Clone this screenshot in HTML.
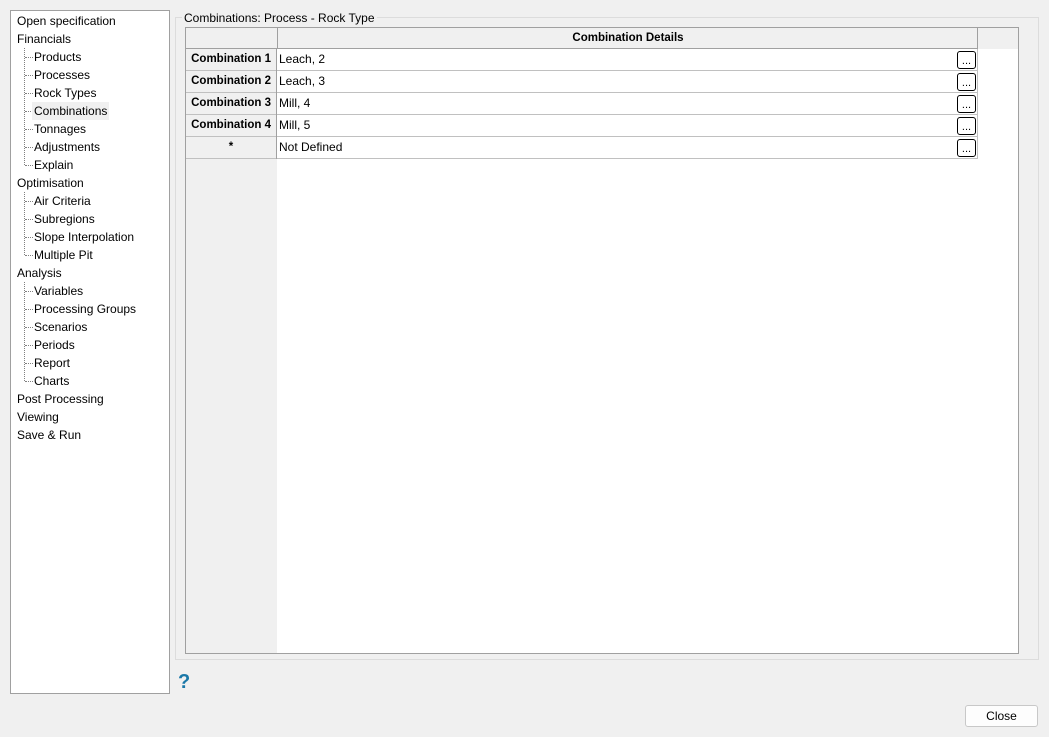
<!DOCTYPE html>
<html><head><style>
body{margin:0;width:1049px;height:737px;background:#f0f0f0;font-family:"Liberation Sans",sans-serif;font-size:12px;color:#000;position:relative;overflow:hidden}
.a{position:absolute}
#tree{left:10px;top:10px;width:158px;height:682px;border:1px solid #a0a0a0;background:#fff}
.t{position:absolute;white-space:nowrap;line-height:18px}
.dl{position:absolute;border-top:1px dotted #808080;width:8px}
.vl{position:absolute;border-left:1px dotted #808080;left:13px}
#grp{left:175px;top:17px;width:862px;height:641px;border:1px solid #dcdcdc}
#grid{left:185px;top:27px;width:832px;height:625px;border:1px solid #a0a0a0;background:#fff}
.cell{position:absolute;box-sizing:border-box;line-height:21px;white-space:nowrap}
.b{font-weight:bold;font-size:11.5px}
.btn{position:absolute;left:771px;width:17px;height:16px;border:1px solid #000;border-radius:3px;background:#fff;font-size:11px;text-align:center;line-height:19px;overflow:hidden}
</style></head><body>
<div id="tree" class="a">
<div class="t" style="left:6px;top:1px">Open specification</div>
<div class="t" style="left:6px;top:19px">Financials</div>
<div class="vl" style="top:37px;height:117px"></div>
<div class="dl" style="left:14px;top:46px"></div><div class="t" style="left:23px;top:37px">Products</div>
<div class="dl" style="left:14px;top:64px"></div><div class="t" style="left:23px;top:55px">Processes</div>
<div class="dl" style="left:14px;top:82px"></div><div class="t" style="left:23px;top:73px">Rock Types</div>
<div class="dl" style="left:14px;top:100px"></div><div class="t" style="left:21px;top:91px;background:#f0f0f0;padding:0 2px">Combinations</div>
<div class="dl" style="left:14px;top:118px"></div><div class="t" style="left:23px;top:109px">Tonnages</div>
<div class="dl" style="left:14px;top:136px"></div><div class="t" style="left:23px;top:127px">Adjustments</div>
<div class="dl" style="left:14px;top:154px"></div><div class="t" style="left:23px;top:145px">Explain</div>
<div class="t" style="left:6px;top:163px">Optimisation</div>
<div class="vl" style="top:181px;height:63px"></div>
<div class="dl" style="left:14px;top:190px"></div><div class="t" style="left:23px;top:181px">Air Criteria</div>
<div class="dl" style="left:14px;top:208px"></div><div class="t" style="left:23px;top:199px">Subregions</div>
<div class="dl" style="left:14px;top:226px"></div><div class="t" style="left:23px;top:217px">Slope Interpolation</div>
<div class="dl" style="left:14px;top:244px"></div><div class="t" style="left:23px;top:235px">Multiple Pit</div>
<div class="t" style="left:6px;top:253px">Analysis</div>
<div class="vl" style="top:271px;height:99px"></div>
<div class="dl" style="left:14px;top:280px"></div><div class="t" style="left:23px;top:271px">Variables</div>
<div class="dl" style="left:14px;top:298px"></div><div class="t" style="left:23px;top:289px">Processing Groups</div>
<div class="dl" style="left:14px;top:316px"></div><div class="t" style="left:23px;top:307px">Scenarios</div>
<div class="dl" style="left:14px;top:334px"></div><div class="t" style="left:23px;top:325px">Periods</div>
<div class="dl" style="left:14px;top:352px"></div><div class="t" style="left:23px;top:343px">Report</div>
<div class="dl" style="left:14px;top:370px"></div><div class="t" style="left:23px;top:361px">Charts</div>
<div class="t" style="left:6px;top:379px">Post Processing</div>
<div class="t" style="left:6px;top:397px">Viewing</div>
<div class="t" style="left:6px;top:415px">Save &amp; Run</div>
</div>
<div id="grp" class="a"></div>
<div class="a" style="left:182px;top:10px;background:#f0f0f0;padding:0 2px;line-height:16px">Combinations: Process - Rock Type</div>
<div id="grid" class="a">
<div class="cell" style="left:0;top:0;width:832px;height:21px;background:#f0f0f0"></div>
<div class="cell" style="left:0;top:0;width:91px;height:625px;background:#f0f0f0"></div>
<div class="cell" style="left:0;top:0;width:792px;height:21px;border-right:1px solid #a0a0a0;border-bottom:1px solid #a0a0a0"></div>
<div class="cell b" style="left:91px;top:0;width:701px;height:21px;border-left:1px solid #a0a0a0;text-align:center">Combination Details</div>
<div class="cell" style="left:0;top:21px;width:792px;height:110px;border-right:1px solid #c0c0c0"></div>

<div class="cell" style="left:0;top:21px;width:792px;height:22px;border-bottom:1px solid #c0c0c0"></div>
<div class="cell b" style="left:0;top:21px;width:91px;height:22px;border-right:1px solid #a0a0a0;text-align:right;padding-right:5px">Combination 1</div>
<div class="cell" style="left:93px;top:21px">Leach, 2</div><div class="btn" style="top:23px">...</div>

<div class="cell" style="left:0;top:43px;width:792px;height:22px;border-bottom:1px solid #c0c0c0"></div>
<div class="cell b" style="left:0;top:43px;width:91px;height:22px;border-right:1px solid #a0a0a0;text-align:right;padding-right:5px">Combination 2</div>
<div class="cell" style="left:93px;top:43px">Leach, 3</div><div class="btn" style="top:45px">...</div>

<div class="cell" style="left:0;top:65px;width:792px;height:22px;border-bottom:1px solid #c0c0c0"></div>
<div class="cell b" style="left:0;top:65px;width:91px;height:22px;border-right:1px solid #a0a0a0;text-align:right;padding-right:5px">Combination 3</div>
<div class="cell" style="left:93px;top:65px">Mill, 4</div><div class="btn" style="top:67px">...</div>

<div class="cell" style="left:0;top:87px;width:792px;height:22px;border-bottom:1px solid #c0c0c0"></div>
<div class="cell b" style="left:0;top:87px;width:91px;height:22px;border-right:1px solid #a0a0a0;text-align:right;padding-right:5px">Combination 4</div>
<div class="cell" style="left:93px;top:87px">Mill, 5</div><div class="btn" style="top:89px">...</div>

<div class="cell" style="left:0;top:109px;width:792px;height:22px;border-bottom:1px solid #c0c0c0"></div>
<div class="cell b" style="left:0;top:109px;width:91px;height:22px;border-right:1px solid #a0a0a0;text-align:center">*</div>
<div class="cell" style="left:93px;top:109px">Not Defined</div><div class="btn" style="top:111px">...</div>
</div>
<div class="a" style="left:178px;top:671px;color:#1a78a8;font-weight:bold;font-size:20px;line-height:22px">?</div>
<div class="a" style="left:965px;top:705px;width:71px;height:20px;border:1px solid #c8c8c8;border-radius:3px;background:#fdfdfd;text-align:center;line-height:20px">Close</div>
</body></html>
